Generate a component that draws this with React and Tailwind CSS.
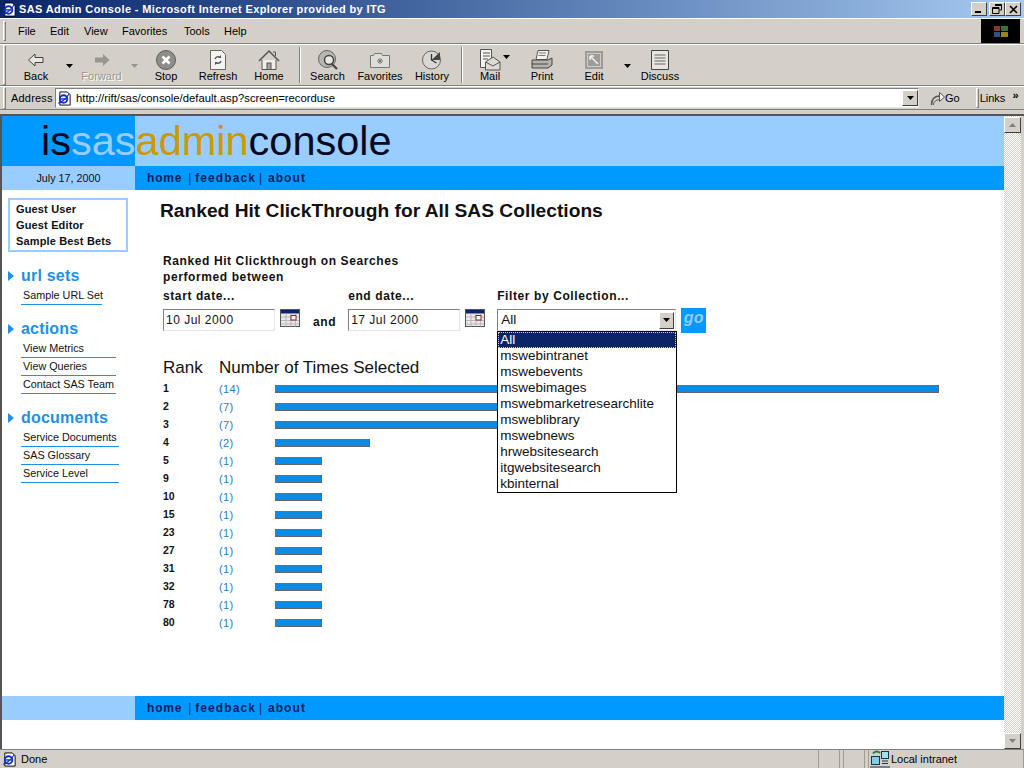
import React from "react";

const Sunken = ({ className, children }) => (
  <div className={"border border-t-[#808080] border-l-[#808080] border-r-[#e8e6e0] border-b-[#e8e6e0] bg-white " + className}>{children}</div>
);

const Grip = () => <div className="h-full w-[3px] shrink-0 border border-t-white border-l-white border-r-[#808080] border-b-[#808080]" />;

const Sep = () => <div className="h-[36px] w-[2px] shrink-0 border-l border-l-[#808080] border-r border-r-white" />;

const Arrow = ({ className }) => (
  <svg width="7" height="4" viewBox="0 0 7 4" className={className}><path d="M0 0h7L3.500 4z" fill="currentColor" /></svg>
);

const IeIcon = ({ size = 16 }) => (
  <svg width={size} height={size} viewBox="0 0 16 16">
    <path d="M3 1h8l3 3v11H3z" fill="#fff" stroke="#000" />
    <circle cx="7" cy="8.500" r="4" fill="none" stroke="#1030c0" strokeWidth="2" />
    <path d="M4 8.500h6" stroke="#1030c0" strokeWidth="1.500" />
    <path d="M1 13C4 13 10 8 13 3" stroke="#1030c0" strokeWidth="1.200" fill="none" />
  </svg>
);

const BackIcon = () => (
  <svg width="18" height="16" viewBox="0 0 18 16"><path d="M8 2 1.500 8 8 14v-3.500h8v-5H8z" fill="#e8e6e0" stroke="#444" /></svg>
);
const ForwardIcon = () => (
  <svg width="18" height="16" viewBox="0 0 18 16"><path d="M10 2l6.500 6L10 14v-3.500H2v-5h8z" fill="#99968f" /></svg>
);
const StopIcon = () => (
  <svg width="22" height="22" viewBox="0 0 22 22">
    <circle cx="11" cy="11" r="9.500" fill="#8d8d8b" stroke="#5c5c5c" />
    <path d="M7.500 7.500l7 7M14.500 7.500l-7 7" stroke="#fff" strokeWidth="2.600" />
  </svg>
);
const RefreshIcon = () => (
  <svg width="20" height="22" viewBox="0 0 20 22">
    <path d="M2.500 1.500h11l4 4v15h-15z" fill="#f4f3ef" stroke="#666" />
    <path d="M7 10a3 3 0 0 1 5-1.500M13 12a3 3 0 0 1-5 1.500" fill="none" stroke="#555" strokeWidth="1.300" />
    <path d="M13 6v3h-3zM7 16v-3h3z" fill="#555" />
  </svg>
);
const HomeIcon = () => (
  <svg width="22" height="22" viewBox="0 0 22 22">
    <path d="M4 11v9.500h14V11" fill="#f0eee8" stroke="#555" />
    <path d="M1 12 11 2l10 10" fill="none" stroke="#555" strokeWidth="1.500" />
    <path d="M15 3h2.500v4" fill="none" stroke="#555" />
    <rect x="9" y="14" width="4" height="6.500" fill="#a9a69f" stroke="#555" />
  </svg>
);
const SearchIcon = () => (
  <svg width="22" height="22" viewBox="0 0 22 22">
    <circle cx="10" cy="10" r="8.500" fill="#b8b6b0" stroke="#666" />
    <circle cx="12" cy="11" r="4.500" fill="#e9e8e4" stroke="#444" strokeWidth="1.500" />
    <path d="M15 15l5 5" stroke="#444" strokeWidth="2.200" />
  </svg>
);
const FavoritesIcon = () => (
  <svg width="22" height="18" viewBox="0 0 22 18">
    <path d="M1.500 4.500h3l1-2h7l1 2h7v12h-19z" fill="#dfddd7" stroke="#777" />
    <path d="M11 7v6M8 10h6M9 8l4 4M13 8l-4 4" stroke="#777" />
  </svg>
);
const HistoryIcon = () => (
  <svg width="22" height="22" viewBox="0 0 22 22">
    <circle cx="10.500" cy="11" r="9" fill="#d9d8d3" stroke="#666" />
    <path d="M10.500 11 19 3v8z" fill="#444" />
    <path d="M10.500 5v6l5 3" fill="none" stroke="#333" strokeWidth="1.300" />
  </svg>
);
const MailIcon = () => (
  <svg width="22" height="24" viewBox="0 0 22 24">
    <path d="M1.500 1.500h11v18h-11z" fill="#f4f3ef" stroke="#555" />
    <path d="M4 5h7M4 8h7M4 11h5" stroke="#555" />
    <path d="M6.500 14 14 9l7 5v8H6.500z" fill="#dddbd5" stroke="#555" />
    <path d="M6.500 14 14 18l7-4" fill="none" stroke="#555" />
  </svg>
);
const PrintIcon = () => (
  <svg width="22" height="22" viewBox="0 0 22 22">
    <path d="M7 1.500h11l-2 9H5z" fill="#f4f3ef" stroke="#555" />
    <path d="M8 4h7M7.500 6.500h7" stroke="#777" />
    <path d="M1 11h16l4-2v7l-4 3H1z" fill="#b5b3ad" stroke="#444" />
    <path d="M1 15h16" stroke="#444" />
  </svg>
);
const EditIcon = () => (
  <svg width="18" height="18" viewBox="0 0 18 18">
    <rect width="18" height="18" fill="#9d9c98" />
    <rect x="2.500" y="2.500" width="13" height="13" fill="none" stroke="#ccc" />
    <path d="M5 5l8 8M5 5h4M5 5v4" stroke="#efefef" strokeWidth="1.500" fill="none" />
  </svg>
);
const DiscussIcon = () => (
  <svg width="20" height="22" viewBox="0 0 20 22">
    <path d="M1.500 1.500h17v19h-17z" fill="#e8e6e0" stroke="#444" />
    <path d="M4.500 6h11M4.500 9h11M4.500 12h11M4.500 15h11" stroke="#666" />
  </svg>
);
const GoIcon = () => (
  <svg width="16" height="16" viewBox="0 0 16 16">
    <path d="M1.500 15C1.500 9 5 6 10 6" fill="none" stroke="#555" strokeWidth="1.500" />
    <path d="M3.500 15a5 5 0 0 1 6.500-5" fill="none" stroke="#555" />
    <path d="M9.500 2.500 14.500 7l-5 4.500z" fill="#f4f3ef" stroke="#555" />
  </svg>
);
const CalendarIcon = () => (
  <svg width="20" height="18" viewBox="0 0 20 18" className="shrink-0">
    <rect x=".5" y=".5" width="19" height="17" fill="#ece9e0" stroke="#555" />
    <rect x="1" y="1" width="18" height="3.500" fill="#0a246a" />
    <path d="M1 8h18M1 11.500h18M1 15h18M6 4.500v13M11 4.500v13M15.500 4.500v13" stroke="#b9b2c8" />
    <rect x="11" y="6.500" width="5" height="4.500" fill="#fff" stroke="#902020" />
  </svg>
);
const ZoneIcon = () => (
  <svg width="20" height="18" viewBox="0 0 20 18">
    <rect x="1.500" y="6.500" width="8" height="8" fill="#7fd0e0" stroke="#234" />
    <rect x="11.500" y="1.500" width="7" height="7" fill="#9fe0f0" stroke="#234" />
    <path d="M3 3.500C5 1 8 1 10 3" stroke="#208040" strokeWidth="2" fill="none" />
    <path d="M0 17h20M12 11h6M12 13.500h6" stroke="#234" />
  </svg>
);

const Tool = ({ label, icon, w, disabled }) => (
  <div className="flex shrink-0 flex-col items-center justify-end" style={{ width: w }}>
    <div className="flex h-[25px] items-center justify-center">{icon}</div>
    <span className={"mt-[-2px] text-[11px] leading-[13px] " + (disabled ? "text-[#9b9890] [text-shadow:1px_1px_0_#fff]" : "text-black")}>{label}</span>
  </div>
);

const NavLinks = () => (
  <div className="flex flex-1 items-center bg-[#0099ff] pl-[12px] text-[12px] font-bold tracking-[0.8px] text-[#0a1f5c]">
    <span>home</span>
    <span className="ml-[6px] font-normal">|</span>
    <span className="ml-[3px] tracking-[1.1px]">feedback</span>
    <span className="ml-[3px] font-normal">|</span>
    <span className="ml-[5px] tracking-[1.1px]">about</span>
  </div>
);

const SideSection = ({ title, links, w, className }) => (
  <div className={className}>
    <div className="flex items-center">
      <svg width="6" height="10" viewBox="0 0 6 10" className="ml-[6px] mr-[7px]"><path d="M0 0l6 5-6 5z" fill="#1e90e6" /></svg>
      <span className="text-[16px] font-bold leading-[20px] tracking-[0.2px] text-[#1e90e6]">{title}</span>
    </div>
    <div className="ml-[19px] mt-[1px] flex flex-col" style={{ width: w }}>
      {links.map((l) => (
        <div key={l} className="h-[18px] whitespace-nowrap border-b border-[#1e90e6] pl-[2px] text-[10.800px] leading-[16px] text-[#111]">{l}</div>
      ))}
    </div>
  </div>
);

const rows = [
  ["1", "(14)", 664], ["2", "(7)", 332], ["3", "(7)", 332], ["4", "(2)", 95],
  ["5", "(1)", 47], ["9", "(1)", 47], ["10", "(1)", 47], ["15", "(1)", 47],
  ["23", "(1)", 47], ["27", "(1)", 47], ["31", "(1)", 47], ["32", "(1)", 47],
  ["78", "(1)", 47], ["80", "(1)", 47],
];

const options = ["mswebintranet", "mswebevents", "mswebimages", "mswebmarketresearchlite", "msweblibrary", "mswebnews", "hrwebsitesearch", "itgwebsitesearch", "kbinternal"];

const Field = ({ label, value }) => (
  <div className="flex flex-col">
    <span className="text-[12px] font-bold leading-[15px] tracking-[0.6px] text-[#111]">{label}</span>
    <div className="mt-[5px] flex items-start">
      <Sunken className="h-[22px] w-[112px] pl-[2px] text-[12px] leading-[20px] tracking-[0.5px] text-[#111]">{value}</Sunken>
      <div className="ml-[5px]"><CalendarIcon /></div>
    </div>
  </div>
);

const App = () => {
  return (
    <div className="flex h-[768px] w-[1024px] flex-col overflow-hidden bg-[#d4d0c8] font-['Liberation_Sans',Arial,sans-serif] text-black">
      {/* title bar */}
      <div className="flex h-[18px] shrink-0 items-center bg-gradient-to-r from-[#0a246a] to-[#a6caf0] pl-[2px] pr-[3px]">
        <IeIcon size={15} />
        <span className="ml-[2px] flex-1 text-[11px] font-bold tracking-[0.38px] text-white">SAS Admin Console - Microsoft Internet Explorer provided by ITG</span>
        <div className="flex h-[14px] w-[16px] items-end justify-start border border-t-white border-l-white border-r-[#404040] border-b-[#404040] bg-[#d4d0c8] pb-[2px] pl-[3px]">
          <span className="block h-[2px] w-[6px] bg-black" />
        </div>
        <div className="ml-[2px] flex h-[14px] w-[16px] items-center justify-center border border-t-white border-l-white border-r-[#404040] border-b-[#404040] bg-[#d4d0c8]">
          <svg width="10" height="10" viewBox="0 0 10 10"><path d="M3 .5h6.500V6H7.500M.5 3.500H7v6H.5zM3 1.500h6.500M.5 4.500H7" fill="none" stroke="#000" /></svg>
        </div>
        <div className="flex h-[14px] w-[16px] items-center justify-center border border-t-white border-l-white border-r-[#404040] border-b-[#404040] bg-[#d4d0c8]">
          <svg width="9" height="9" viewBox="0 0 9 9"><path d="M1 1l7 7M8 1 1 8" stroke="#000" strokeWidth="1.600" /></svg>
        </div>
      </div>

      {/* menu bar */}
      <div className="flex h-[26px] shrink-0 items-stretch border-t border-t-white border-b border-b-[#808080]">
        <div className="flex flex-1 items-center py-[2px] pl-[3px]">
          <Grip />
          <div className="ml-[12px] flex text-[11px] leading-none">
            <span className="w-[32px]">File</span>
            <span className="w-[34px]">Edit</span>
            <span className="w-[38px]">View</span>
            <span className="w-[62px]">Favorites</span>
            <span className="w-[40px]">Tools</span>
            <span>Help</span>
          </div>
        </div>
        <div className="mr-[4px] flex w-[39px] shrink-0 items-center justify-center bg-black">
          <div className="grid h-[11px] w-[14px] grid-cols-2 gap-[1px]">
            <div className="bg-[#8a3a2c]" /><div className="bg-[#3a6e3a]" /><div className="bg-[#2f4f88]" /><div className="bg-[#9a8028]" />
          </div>
        </div>
      </div>

      {/* toolbar */}
      <div className="flex h-[42px] shrink-0 items-center border-t border-t-white border-b border-b-[#808080] pl-[3px]">
        <Grip />
        <div className="ml-[2px]"><Tool label="Back" icon={<BackIcon />} w={56} /></div>
        <Arrow className="ml-[2px] mt-[2px] text-black" />
        <Tool label="Forward" icon={<ForwardIcon />} w={57} disabled />
        <Arrow className="ml-[1px] mr-[2px] mt-[2px] text-[#99968f]" />
        <Tool label="Stop" icon={<StopIcon />} w={52} />
        <Tool label="Refresh" icon={<RefreshIcon />} w={52} />
        <Tool label="Home" icon={<HomeIcon />} w={50} />
        <div className="ml-[5px]"><Sep /></div>
        <Tool label="Search" icon={<SearchIcon />} w={53} />
        <Tool label="Favorites" icon={<FavoritesIcon />} w={52} />
        <Tool label="History" icon={<HistoryIcon />} w={52} />
        <div className="ml-[3px] mr-[2px]"><Sep /></div>
        <Tool label="Mail" icon={<MailIcon />} w={50} />
        <Arrow className="ml-[-12px] mr-[6px] mt-[-16px] text-black" />
        <Tool label="Print" icon={<PrintIcon />} w={52} />
        <Tool label="Edit" icon={<EditIcon />} w={52} />
        <Arrow className="ml-[4px] mr-[-2px] mt-[2px] text-black" />
        <Tool label="Discuss" icon={<DiscussIcon />} w={62} />
      </div>

      {/* address bar */}
      <div className="flex h-[24px] shrink-0 items-center border-t border-t-white border-b border-b-[#808080] pl-[3px]">
        <Grip />
        <span className="ml-[5px] w-[41px] text-[11px] tracking-[0.2px]">Address</span>
        <Sunken className="ml-[3px] flex h-[20px] w-[864px] items-center">
          <div className="ml-[1px]"><IeIcon size={15} /></div>
          <span className="ml-[4px] flex-1 text-[11.300px]">http://rift/sas/console/default.asp?screen=recorduse</span>
          <div className="flex h-[16px] w-[16px] items-center justify-center border border-t-white border-l-white border-r-[#404040] border-b-[#404040] bg-[#d4d0c8]"><Arrow className="text-black" /></div>
        </Sunken>
        <div className="ml-[11px]"><GoIcon /></div>
        <span className="ml-[-1px] text-[11px]">Go</span>
        <div className="ml-[16px] h-[20px] w-[3px] border border-t-white border-l-white border-r-[#808080] border-b-[#808080]" />
        <span className="ml-[1px] text-[11px]">Links</span>
        <span className="ml-[7px] mt-[-6px] text-[11px] font-bold leading-none">»</span>
      </div>

      {/* browser viewport */}
      <div className="mt-[4px] flex min-h-0 flex-1 border-t-2 border-l-2 border-t-[#555] border-l-[#555] bg-white">
        <div className="relative flex min-w-0 flex-1 flex-col">
          {/* logo band */}
          <div className="flex h-[50px] shrink-0 bg-[#99ccff]">
            <div className="relative w-[133px] shrink-0 bg-[#0099ff]">
              <div className="absolute left-[39px] top-[1px] flex whitespace-nowrap text-[41.500px] leading-[48px]">
                <span className="text-[#050a20]">is</span>
                <span className="text-[#99ccff]">sas</span>
                <span className="text-[#cc9900]">admin</span>
                <span className="text-[#050a20]">console</span>
              </div>
            </div>
          </div>

          {/* date and nav */}
          <div className="flex h-[24px] shrink-0">
            <div className="flex w-[133px] shrink-0 items-center justify-center bg-[#99ccff] text-[10.800px] text-[#111]">July 17, 2000</div>
            <NavLinks />
          </div>

          <div className="flex min-h-0 flex-1">
            {/* sidebar */}
            <div className="w-[133px] shrink-0 pt-[8px]">
              <div className="ml-[6px] flex h-[54px] w-[120px] flex-col justify-center border-2 border-[#99ccff] pl-[6px] text-[11px] font-bold leading-[16px] tracking-[0.15px] text-[#111]">
                <span>Guest User</span>
                <span>Guest Editor</span>
                <span>Sample Best Bets</span>
              </div>
              <SideSection className="mt-[14px]" title="url sets" links={["Sample URL Set"]} w={81} />
              <SideSection className="mt-[14px]" title="actions" links={["View Metrics", "View Queries", "Contact SAS Team"]} w={95} />
              <SideSection className="mt-[14px]" title="documents" links={["Service Documents", "SAS Glossary", "Service Level"]} w={98} />
            </div>

            {/* main */}
            <div className="relative min-w-0 flex-1">
              <h1 className="ml-[25px] mt-[10px] text-[19.200px] font-bold leading-[22px] text-[#111]">Ranked Hit ClickThrough for All SAS Collections</h1>
              <p className="ml-[28px] mt-[31px] text-[12px] font-bold leading-[16px] tracking-[0.6px] text-[#111]">Ranked Hit Clickthrough on Searches<br />performed between</p>
              <div className="ml-[28px] mt-[4px] flex items-start">
                <Field label="start date..." value="10 Jul 2000" />
                <span className="ml-[13px] mt-[24px] text-[12px] font-bold tracking-[0.6px] text-[#111]">and</span>
                <div className="ml-[12px]"><Field label="end date..." value="17 Jul 2000" /></div>
                <div className="relative ml-[12px] flex flex-col">
                  <span className="text-[12px] font-bold leading-[15px] tracking-[0.6px] text-[#111]">Filter by Collection...</span>
                  <div className="mt-[5px] flex items-start">
                    <Sunken className="flex h-[22px] w-[179px] items-center justify-between pl-[3px] pr-[1px] text-[13.500px] text-[#111]">
                      All
                      <div className="flex h-[17px] w-[15px] items-center justify-center border border-t-white border-l-white border-r-[#404040] border-b-[#404040] bg-[#d4d0c8]"><Arrow className="text-black" /></div>
                    </Sunken>
                    <div className="ml-[5px] mt-[-1px] flex h-[25px] w-[25px] items-start justify-center bg-[#0099ff] text-[16px] font-bold italic leading-[20px] text-[#99ccff]">go</div>
                  </div>
                  {/* open dropdown list */}
                  <div className="absolute left-0 top-[42px] z-10 w-[180px] border border-black bg-white text-[13.500px] leading-[16px] text-[#111]">
                    <div className="bg-[#0a246a] pl-[2px] text-white outline-1 -outline-offset-1 outline-dotted outline-[#d4d0c8]">All</div>
                    {options.map((o) => <div key={o} className="pl-[2px]">{o}</div>)}
                  </div>
                </div>
              </div>

              {/* chart */}
              <div className="ml-[28px] mt-[25px] flex items-end text-[17px] leading-[20px] text-[#111]">
                <span className="w-[56px]">Rank</span>
                <span>Number of Times Selected</span>
              </div>
              <div className="ml-[28px] mt-[2px] flex flex-col">
                {rows.map(([rank, count, w]) => (
                  <div key={rank} className="flex h-[18px] items-center">
                    <span className="w-[56px] text-[10.500px] font-bold text-[#111]">{rank}</span>
                    <span className="w-[56px] text-[11px] tracking-[0.4px] text-[#1e7fc0]">{count}</span>
                    <div className="h-[8px] border-r border-b border-[#666] bg-[#0a8ce6]" style={{ width: w }} />
                  </div>
                ))}
              </div>
            </div>
          </div>

          {/* bottom nav */}
          <div className="flex h-[24px] shrink-0">
            <div className="w-[133px] shrink-0 bg-[#99ccff]" />
            <NavLinks />
          </div>
          <div className="h-[29px] shrink-0" />
        </div>

        {/* scrollbar */}
        <div className="flex w-[17px] shrink-0 flex-col bg-[#e8e6e0] bg-[repeating-conic-gradient(#d4d0c8_0_25%,#fff_0_50%)] bg-[length:2px_2px]">
          <div className="mt-[1px] flex h-[16px] items-center justify-center border border-t-white border-l-white border-r-[#404040] border-b-[#404040] bg-[#d4d0c8]"><Arrow className="rotate-180 text-[#808080]" /></div>
          <div className="flex-1" />
          <div className="flex h-[16px] items-center justify-center border border-t-white border-l-white border-r-[#404040] border-b-[#404040] bg-[#d4d0c8]"><Arrow className="text-[#808080]" /></div>
        </div>
        <div className="w-[3px] shrink-0 bg-[#d4d0c8]" />
      </div>

      {/* status bar */}
      <div className="flex h-[19px] shrink-0 items-center border-t border-t-[#808080] text-[11px]">
        <div className="ml-[2px]"><IeIcon size={15} /></div>
        <span className="ml-[4px] w-[797px]">Done</span>
        <div className="h-full w-[22px] border-l border-r border-[#a09c94]" />
        <div className="ml-[3px] h-full w-[22px] border-l border-r border-[#a09c94]" />
        <div className="ml-[3px] flex h-full flex-1 items-center border-l border-r border-[#a09c94] pl-[1px]">
          <ZoneIcon />
          <span className="ml-[1px]">Local intranet</span>
        </div>
      </div>
    </div>
  );
};

export default App;
